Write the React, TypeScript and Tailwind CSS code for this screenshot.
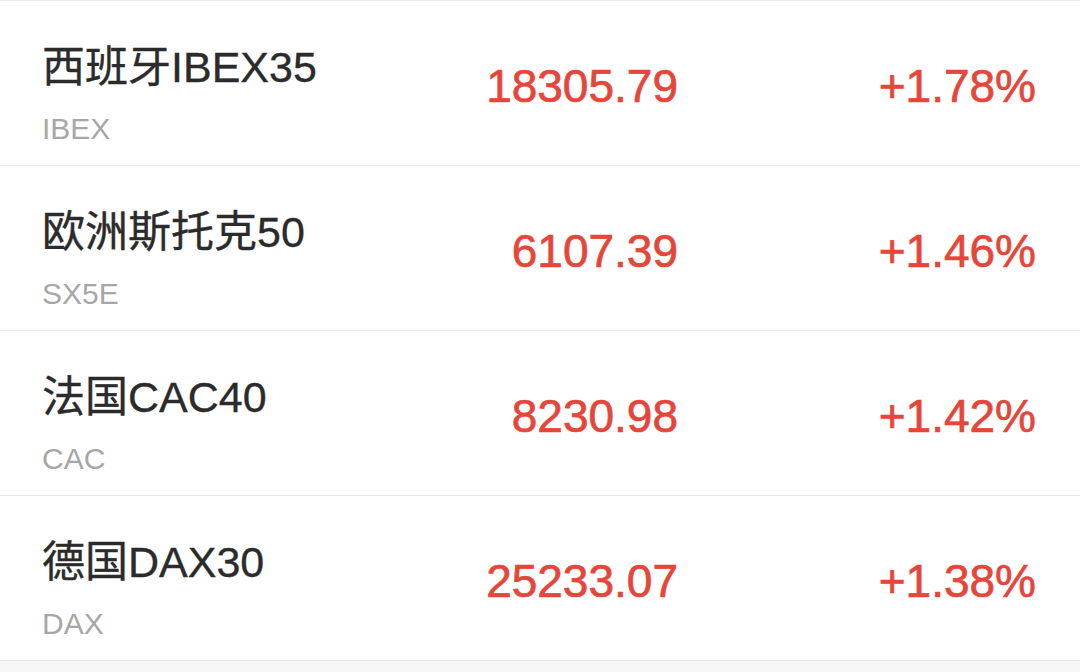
import React from "react";

const rows = [
  { name: "西班牙IBEX35", code: "IBEX", price: "18305.79", pct: "+1.78%" },
  { name: "欧洲斯托克50", code: "SX5E", price: "6107.39", pct: "+1.46%" },
  { name: "法国CAC40", code: "CAC", price: "8230.98", pct: "+1.42%" },
  { name: "德国DAX30", code: "DAX", price: "25233.07", pct: "+1.38%" },
];

export default function App() {
  return (
    <div
      className="w-[1080px] h-[672px] bg-[#f7f7f7] overflow-hidden"
      style={{ fontFamily: '"Liberation Sans", "Noto Sans CJK SC", sans-serif' }}
    >
      <div className="bg-white border-t border-[#ececec]">
        {rows.map((r) => (
          <div
            key={r.code}
            className="flex h-[165px] border-b border-[#e9e9e9] pl-[42px] pr-[44px]"
          >
            <div className="flex-1 flex flex-col pt-[45px]">
              <div className="text-[43px] leading-[43px] text-[#2b2b2b] [-webkit-text-stroke:0.35px_#2b2b2b]">
                {r.name}
              </div>
              <div className="mt-[25px] text-[30px] leading-[30px] text-[#a7a7a7]">{r.code}</div>
            </div>
            <div className="pt-[63px] text-right text-[46px] leading-[45px] text-[#e6463a] [-webkit-text-stroke:0.7px_#e6463a]">
              {r.price}
            </div>
            <div className="w-[358px] pt-[63px] text-right text-[46px] leading-[45px] text-[#e6463a] [-webkit-text-stroke:0.7px_#e6463a]">
              {r.pct}
            </div>
          </div>
        ))}
      </div>
    </div>
  );
}
